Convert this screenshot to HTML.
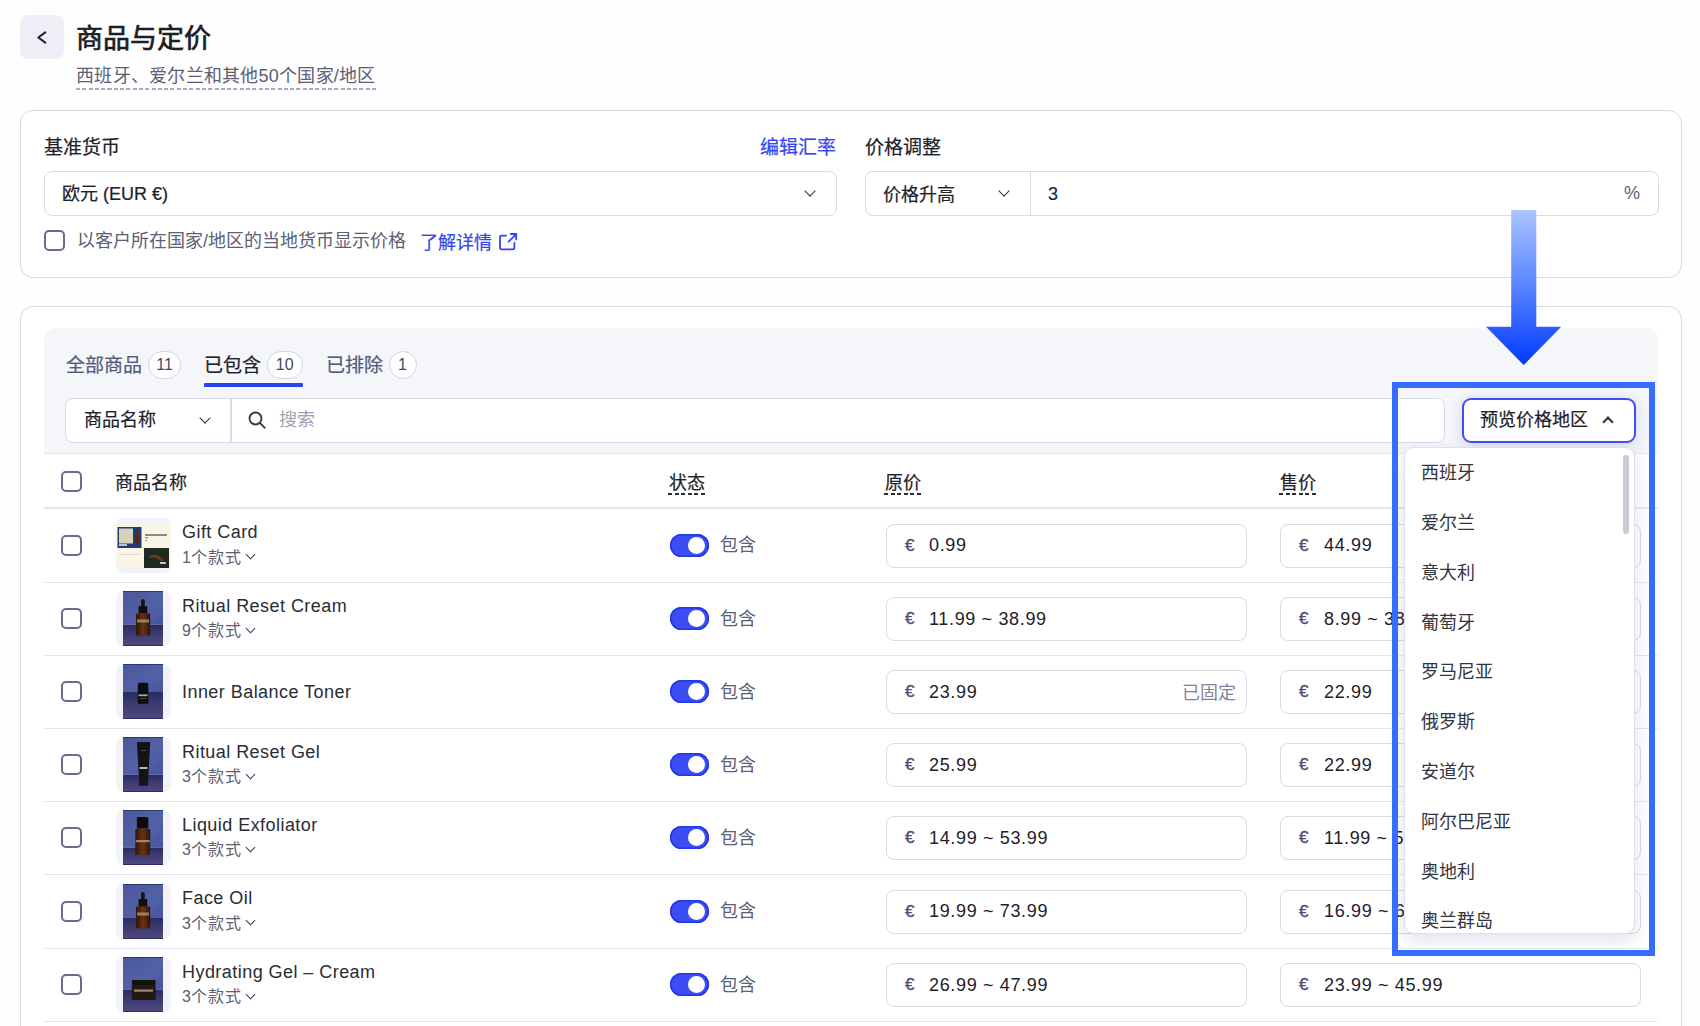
<!DOCTYPE html>
<html lang="zh-CN">
<head>
<meta charset="utf-8">
<style>
*{box-sizing:border-box;margin:0;padding:0}
html,body{width:1700px;height:1026px;overflow:hidden;background:#fefeff}
body{position:relative;font-family:"Liberation Sans",sans-serif;color:#1f2129}
.a{position:absolute;white-space:nowrap}
.t18{font-size:18px;line-height:24px}
.gray{color:#5b6073}
.med{font-weight:400;-webkit-text-stroke:0.22px currentColor}
.card{position:absolute;border:1.5px solid #d7dae7;border-radius:13px;background:#fff}
.box{position:absolute;border:1.5px solid #d7dae7;border-radius:8px;background:#fff}
.chev{position:absolute;width:8px;height:8px;border-right:1.7px solid #2e3140;border-bottom:1.7px solid #2e3140;transform:rotate(45deg)}
.cb{position:absolute;width:21px;height:21px;border:2.2px solid #676d92;border-radius:5px;background:#fff}
.sep{position:absolute;left:44px;width:1614px;height:1.5px;background:#e6e8ef}
.thumb{position:absolute;left:116px;width:55px;height:55px;border-radius:7px;background:#f2f3f8;overflow:hidden}
.pname{position:absolute;left:182px;font-size:18px;line-height:22px;color:#2a2c35;letter-spacing:0.45px}
.var{position:absolute;left:182px;font-size:16px;line-height:20px;color:#5b6073;letter-spacing:0.6px}
.tog{position:absolute;left:669.5px;width:39px;height:23px;border-radius:12px;background:#3d4df4;box-shadow:inset 0 0 0 1.5px #2236ea}
.tog:after{content:"";position:absolute;right:3.5px;top:3px;width:17px;height:17px;border-radius:50%;background:#fff}
.inc{position:absolute;left:720px;font-size:18px;line-height:24px;color:#5b6073}
.inp{position:absolute;height:44px;border:1.5px solid #d7dae7;border-radius:8px;background:#fff}
.eur{position:absolute;left:18px;top:10px;font-size:17px;line-height:22px;color:#4a5078;-webkit-text-stroke:0.4px #4a5078}
.val{position:absolute;left:42px;top:9.8px;font-size:18px;line-height:22px;color:#1f2129;letter-spacing:0.65px}
.badge{position:absolute;height:28px;border:1.5px solid #d2d5e3;border-radius:14px;background:#fff;font-size:16px;line-height:25px;text-align:center;color:#464a5c}
.vchev{display:inline-block;width:7px;height:7px;border-right:1.6px solid #5b6073;border-bottom:1.6px solid #5b6073;transform:rotate(45deg);margin-left:6px;position:relative;top:-4.5px;border-color:#3a3e52;border-width:0 1.8px 1.8px 0}
</style>
</head>
<body>
<svg width="0" height="0" style="position:absolute"><defs>
<linearGradient id="gtop" x1="0" y1="0" x2="1" y2="1"><stop offset="0" stop-color="#4b5799"/><stop offset="0.6" stop-color="#5261a6"/><stop offset="1" stop-color="#4654a0"/></linearGradient>
<linearGradient id="gbot" x1="0" y1="0" x2="0" y2="1"><stop offset="0" stop-color="#2a2b62"/><stop offset="0.5" stop-color="#3f3c74"/><stop offset="1" stop-color="#4e4a7c"/></linearGradient>
<linearGradient id="gamber" x1="0" y1="0" x2="1" y2="0"><stop offset="0" stop-color="#2e1408"/><stop offset=".5" stop-color="#6a3414"/><stop offset="1" stop-color="#2e1408"/></linearGradient>
</defs></svg>
<!-- header -->
<div class="a" style="left:20px;top:15px;width:44px;height:44px;border-radius:8px;background:#efeef7"></div>
<svg class="a" style="left:20px;top:15px" width="44" height="44" viewBox="0 0 44 44"><polyline points="25.3,17.4 18.3,22.5 25.3,27.6" fill="none" stroke="#1f2129" stroke-width="2" stroke-linecap="round" stroke-linejoin="round"/></svg>
<div class="a" style="left:76px;top:21px;font-size:27px;line-height:36px;color:#1c1e26;-webkit-text-stroke:0.7px #1c1e26">商品与定价</div>
<div class="a gray" style="left:76px;top:63.8px;font-size:18px;line-height:24px;letter-spacing:0.25px">西班牙、爱尔兰和其他50个国家/地区</div>
<div class="a" style="left:75.5px;top:88px;width:300px;height:2px;background:repeating-linear-gradient(90deg,#a6abc0 0 4px,transparent 4px 6.3px)"></div>

<!-- card 1 -->
<div class="card" style="left:20px;top:110px;width:1662px;height:168px"></div>
<div class="a med" style="left:44px;top:135.5px;font-size:19px;line-height:24px">基准货币</div>
<div class="a med" style="left:759.5px;top:135.5px;font-size:19px;line-height:24px;color:#3146f2">编辑汇率</div>
<div class="box" style="left:44px;top:171px;width:793px;height:45px"></div>
<div class="a t18 med" style="left:62px;top:182px">欧元 (EUR €)</div>
<div class="chev" style="left:806px;top:187px"></div>
<div class="a med" style="left:865px;top:135.5px;font-size:19px;line-height:24px">价格调整</div>
<div class="box" style="left:865px;top:171px;width:794px;height:45px"></div>
<div class="a" style="left:1029.5px;top:171px;width:1.5px;height:45px;background:#d7dae7"></div>
<div class="a t18 med" style="left:883px;top:182.5px">价格升高</div>
<div class="chev" style="left:1000px;top:187px"></div>
<div class="a t18" style="left:1048px;top:182px;-webkit-text-stroke:0.15px #1f2129">3</div>
<div class="a t18 gray" style="left:1624px;top:181px">%</div>
<div class="cb" style="left:44px;top:230px"></div>
<div class="a t18 gray" style="left:77px;top:229px">以客户所在国家/地区的当地货币显示价格</div>
<div class="a t18 med" style="left:420px;top:230.5px;color:#3146f2">了解详情</div>

<!-- card 2 -->
<div class="card" style="left:20px;top:306px;width:1662px;height:760px"></div>
<div class="a" style="left:44px;top:328px;width:1614px;height:126px;background:#f5f6fa;border-radius:12px 12px 0 0;border-bottom:1.5px solid #e3e5ee"></div>


<!-- tabs -->
<div class="a med" style="left:66px;top:351.5px;font-size:19px;line-height:28px;color:#535a78">全部商品</div>
<div class="badge" style="left:148px;top:351px;width:33px">11</div>
<div class="a med" style="left:204px;top:351.5px;font-size:19px;line-height:28px;color:#1f2129">已包含</div>
<div class="badge" style="left:266.5px;top:351px;width:36.5px">10</div>
<div class="a" style="left:204px;top:383px;width:99px;height:4px;background:#2b41f2;border-radius:1px"></div>
<div class="a med" style="left:326px;top:351.5px;font-size:19px;line-height:28px;color:#535a78">已排除</div>
<div class="badge" style="left:388.5px;top:351px;width:28px">1</div>
<!-- search row -->
<div class="box" style="left:65px;top:398px;width:1380px;height:45px"></div>
<div class="a" style="left:230px;top:398px;width:1.5px;height:45px;background:#d7dae7"></div>
<div class="a t18 med" style="left:84px;top:408px">商品名称</div>
<div class="chev" style="left:200.5px;top:414px"></div>
<svg class="a" style="left:247px;top:410px" width="20" height="20" viewBox="0 0 20 20"><circle cx="8.5" cy="8.5" r="6" fill="none" stroke="#353846" stroke-width="1.8"/><line x1="13" y1="13" x2="17.8" y2="17.8" stroke="#353846" stroke-width="1.8" stroke-linecap="round"/></svg>
<div class="a t18" style="left:279px;top:408px;color:#9ea2b6">搜索</div>
<div class="sep" style="top:507px"></div>
<div class="cb" style="left:61px;top:471px"></div>
<div class="a t18 med" style="left:115px;top:471px">商品名称</div>
<div class="a t18 med" style="left:669px;top:471px">状态</div>
<div class="a" style="left:668px;top:493px;width:37px;height:2px;background:repeating-linear-gradient(90deg,#2a2c36 0 4px,transparent 4px 6.6px)"></div>
<div class="a t18 med" style="left:885px;top:471px">原价</div>
<div class="a" style="left:884px;top:493px;width:37px;height:2px;background:repeating-linear-gradient(90deg,#2a2c36 0 4px,transparent 4px 6.6px)"></div>
<div class="a t18 med" style="left:1280px;top:471px">售价</div>
<div class="a" style="left:1279px;top:493px;width:37px;height:2px;background:repeating-linear-gradient(90deg,#2a2c36 0 4px,transparent 4px 6.6px)"></div>
<div class="sep" style="top:581.5px"></div>
<div class="cb" style="left:61px;top:534.5px"></div>
<div class="thumb" style="top:517.5px"><svg style="position:absolute;left:0;top:6px" width="55" height="44" viewBox="0 0 55 44"><rect width="55" height="44" fill="#fbf5e6"/><rect x="1.5" y="3" width="24" height="21" fill="#213a78"/><rect x="3" y="4.5" width="14" height="15" fill="#d8d2bb"/><rect x="19" y="8" width="4" height="12" rx="1" fill="#5a2a12"/><rect x="3" y="20" width="8" height="2" fill="#fff" opacity=".7"/><rect x="29" y="10" width="22" height="2" fill="#5b5b5b" opacity=".7"/><rect x="29" y="13" width="3" height="1.5" fill="#555" opacity=".6"/><rect x="29" y="16" width="2" height="1" fill="#555" opacity=".6"/><rect x="28" y="24" width="25" height="20" fill="#1f2a20"/><path d="M33 32 Q40 28 48 36 L46 38 Q40 32 34 34Z" fill="#6b3a22"/><rect x="44" y="38" width="6" height="2" fill="#eee" opacity=".8"/><rect x="3" y="30" width="21" height="1" fill="#bbb" opacity=".5"/></svg></div>
<div class="pname" style="top:521.0px">Gift Card</div>
<div class="var" style="top:547.5px">1个款式<span class="vchev"></span></div>
<div class="tog" style="top:533.5px"></div>
<div class="inc" style="top:533.0px">包含</div>
<div class="inp" style="left:886px;width:361px;top:523.5px"><span class="eur">€</span><span class="val">0.99</span></div>
<div class="inp" style="left:1280px;width:361px;top:523.5px"><span class="eur">€</span><span class="val" style="left:43px">44.99</span></div>
<div class="sep" style="top:654.5px"></div>
<div class="cb" style="left:61px;top:608.0px"></div>
<div class="thumb" style="top:591.0px"><svg style="position:absolute;left:7px;top:0px" width="40" height="55" viewBox="0 0 40 55"><rect x="0" y="0" width="40" height="33.5" fill="url(#gtop)"/><rect x="0" y="33.5" width="40" height="21.5" fill="url(#gbot)"/><rect x="0" y="0" width="40" height="0.8" fill="#24306e"/><rect x="0" y="54.2" width="40" height="0.8" fill="#2a2560"/><rect x="18" y="8" width="3.8" height="8" rx="1.9" fill="#1b1510"/><rect x="15.5" y="15" width="8.8" height="7.8" rx="1" fill="#120e0a"/><rect x="13" y="22.5" width="14.2" height="22" rx="1" fill="url(#gamber)"/><rect x="14" y="28.5" width="12" height="3" fill="#d9b894" opacity=".6"/></svg></div>
<div class="pname" style="top:594.5px">Ritual Reset Cream</div>
<div class="var" style="top:621.0px">9个款式<span class="vchev"></span></div>
<div class="tog" style="top:607.0px"></div>
<div class="inc" style="top:606.5px">包含</div>
<div class="inp" style="left:886px;width:361px;top:597.0px"><span class="eur">€</span><span class="val">11.99 ~ 38.99</span></div>
<div class="inp" style="left:1280px;width:361px;top:597.0px"><span class="eur">€</span><span class="val" style="left:43px">8.99 ~ 38.99</span></div>
<div class="sep" style="top:727.5px"></div>
<div class="cb" style="left:61px;top:681.0px"></div>
<div class="thumb" style="top:664.0px"><svg style="position:absolute;left:7px;top:0px" width="40" height="55" viewBox="0 0 40 55"><rect x="0" y="0" width="40" height="28" fill="url(#gtop)"/><rect x="0" y="28" width="40" height="27" fill="url(#gbot)"/><rect x="0" y="0" width="40" height="0.8" fill="#24306e"/><rect x="0" y="54.2" width="40" height="0.8" fill="#2a2560"/><rect x="14.8" y="18.7" width="10.5" height="21" rx="1.5" fill="#0c0c10"/><rect x="15.5" y="30.4" width="9" height="1.8" fill="#d9d9e0" opacity=".75"/><rect x="16.5" y="34" width="7" height="1" fill="#888" opacity=".5"/></svg></div>
<div class="pname" style="top:680.5px">Inner Balance Toner</div>
<div class="tog" style="top:680.0px"></div>
<div class="inc" style="top:679.5px">包含</div>
<div class="inp" style="left:886px;width:361px;top:670.0px"><span class="eur">€</span><span class="val">23.99</span><span class="a" style="right:10.5px;top:10.5px;font-size:18px;line-height:22px;color:#7f849a">已固定</span></div>
<div class="inp" style="left:1280px;width:361px;top:670.0px"><span class="eur">€</span><span class="val" style="left:43px">22.99</span></div>
<div class="sep" style="top:800.5px"></div>
<div class="cb" style="left:61px;top:754.0px"></div>
<div class="thumb" style="top:737.0px"><svg style="position:absolute;left:7px;top:0px" width="40" height="55" viewBox="0 0 40 55"><rect x="0" y="0" width="40" height="37.5" fill="url(#gtop)"/><rect x="0" y="37.5" width="40" height="17.5" fill="url(#gbot)"/><rect x="0" y="0" width="40" height="0.8" fill="#24306e"/><rect x="0" y="54.2" width="40" height="0.8" fill="#2a2560"/><path d="M13.9 5 L27.2 5 L24.9 48.7 L16.4 48.7 Z" fill="#141315"/><rect x="16.5" y="30" width="8" height="2" fill="#e0e0e6" opacity=".8"/><rect x="18" y="13" width="5" height="1" fill="#777" opacity=".5"/></svg></div>
<div class="pname" style="top:740.5px">Ritual Reset Gel</div>
<div class="var" style="top:767.0px">3个款式<span class="vchev"></span></div>
<div class="tog" style="top:753.0px"></div>
<div class="inc" style="top:752.5px">包含</div>
<div class="inp" style="left:886px;width:361px;top:743.0px"><span class="eur">€</span><span class="val">25.99</span></div>
<div class="inp" style="left:1280px;width:361px;top:743.0px"><span class="eur">€</span><span class="val" style="left:43px">22.99</span></div>
<div class="sep" style="top:873.5px"></div>
<div class="cb" style="left:61px;top:827.0px"></div>
<div class="thumb" style="top:810.0px"><svg style="position:absolute;left:7px;top:0px" width="40" height="55" viewBox="0 0 40 55"><rect x="0" y="0" width="40" height="37.5" fill="url(#gtop)"/><rect x="0" y="37.5" width="40" height="17.5" fill="url(#gbot)"/><rect x="0" y="0" width="40" height="0.8" fill="#24306e"/><rect x="0" y="54.2" width="40" height="0.8" fill="#2a2560"/><rect x="13.9" y="7" width="11.4" height="11.6" rx="1.5" fill="#0e0b09"/><rect x="12.3" y="18.4" width="14.9" height="26.6" rx="2" fill="url(#gamber)"/><rect x="12.8" y="30" width="14" height="2.2" fill="#e0c4a0" opacity=".6"/></svg></div>
<div class="pname" style="top:813.5px">Liquid Exfoliator</div>
<div class="var" style="top:840.0px">3个款式<span class="vchev"></span></div>
<div class="tog" style="top:826.0px"></div>
<div class="inc" style="top:825.5px">包含</div>
<div class="inp" style="left:886px;width:361px;top:816.0px"><span class="eur">€</span><span class="val">14.99 ~ 53.99</span></div>
<div class="inp" style="left:1280px;width:361px;top:816.0px"><span class="eur">€</span><span class="val" style="left:43px">11.99 ~ 50.99</span></div>
<div class="sep" style="top:947.5px"></div>
<div class="cb" style="left:61px;top:900.5px"></div>
<div class="thumb" style="top:883.5px"><svg style="position:absolute;left:7px;top:0px" width="40" height="55" viewBox="0 0 40 55"><rect x="0" y="0" width="40" height="34" fill="url(#gtop)"/><rect x="0" y="34" width="40" height="21" fill="url(#gbot)"/><rect x="0" y="0" width="40" height="0.8" fill="#24306e"/><rect x="0" y="54.2" width="40" height="0.8" fill="#2a2560"/><rect x="18" y="8" width="3.8" height="8" rx="1.9" fill="#1b1510"/><rect x="15.5" y="15" width="8.8" height="7.8" rx="1" fill="#120e0a"/><rect x="13" y="22.5" width="14.2" height="22" rx="1" fill="url(#gamber)"/><rect x="14" y="28.5" width="12" height="3" fill="#d9b894" opacity=".6"/></svg></div>
<div class="pname" style="top:887.0px">Face Oil</div>
<div class="var" style="top:913.5px">3个款式<span class="vchev"></span></div>
<div class="tog" style="top:899.5px"></div>
<div class="inc" style="top:899.0px">包含</div>
<div class="inp" style="left:886px;width:361px;top:889.5px"><span class="eur">€</span><span class="val">19.99 ~ 73.99</span></div>
<div class="inp" style="left:1280px;width:361px;top:889.5px"><span class="eur">€</span><span class="val" style="left:43px">16.99 ~ 69.99</span></div>
<div class="sep" style="top:1020.5px"></div>
<div class="cb" style="left:61px;top:974.0px"></div>
<div class="thumb" style="top:957.0px"><svg style="position:absolute;left:7px;top:0px" width="40" height="55" viewBox="0 0 40 55"><rect x="0" y="0" width="40" height="32.5" fill="url(#gtop)"/><rect x="0" y="32.5" width="40" height="22.5" fill="url(#gbot)"/><rect x="0" y="0" width="40" height="0.8" fill="#24306e"/><rect x="0" y="54.2" width="40" height="0.8" fill="#2a2560"/><rect x="9" y="23" width="23.5" height="5.5" rx="1" fill="#16110d"/><rect x="8.7" y="28" width="24" height="15" rx="1.5" fill="#221912"/><rect x="11" y="32.5" width="19" height="2.2" fill="#dcc6ae" opacity=".65"/></svg></div>
<div class="pname" style="top:960.5px">Hydrating Gel – Cream</div>
<div class="var" style="top:987.0px">3个款式<span class="vchev"></span></div>
<div class="tog" style="top:973.0px"></div>
<div class="inc" style="top:972.5px">包含</div>
<div class="inp" style="left:886px;width:361px;top:963.0px"><span class="eur">€</span><span class="val">26.99 ~ 47.99</span></div>
<div class="inp" style="left:1280px;width:361px;top:963.0px"><span class="eur">€</span><span class="val" style="left:43px">23.99 ~ 45.99</span></div>
<div class="a" style="left:1462px;top:398px;width:174px;height:45px;border:2px solid #3d50f6;border-radius:9px;background:#fff;box-shadow:0 2px 14px rgba(60,70,140,.18)"></div>
<div class="a t18 med" style="left:1480px;top:408px">预览价格地区</div>
<div class="chev" style="left:1604px;top:418px;transform:rotate(-135deg);border-width:0 2px 2px 0"></div>
<div class="a" style="left:1404px;top:447px;width:231px;height:487px;border:1px solid #dfe1ea;border-radius:10px;background:#fff;box-shadow:0 6px 18px rgba(60,70,140,.16);overflow:hidden">
<div class="a" style="left:16px;top:13.2px;font-size:18px;line-height:24px;color:#32353f">西班牙</div>
<div class="a" style="left:16px;top:63.0px;font-size:18px;line-height:24px;color:#32353f">爱尔兰</div>
<div class="a" style="left:16px;top:112.8px;font-size:18px;line-height:24px;color:#32353f">意大利</div>
<div class="a" style="left:16px;top:162.6px;font-size:18px;line-height:24px;color:#32353f">葡萄牙</div>
<div class="a" style="left:16px;top:212.4px;font-size:18px;line-height:24px;color:#32353f">罗马尼亚</div>
<div class="a" style="left:16px;top:262.2px;font-size:18px;line-height:24px;color:#32353f">俄罗斯</div>
<div class="a" style="left:16px;top:312.0px;font-size:18px;line-height:24px;color:#32353f">安道尔</div>
<div class="a" style="left:16px;top:361.8px;font-size:18px;line-height:24px;color:#32353f">阿尔巴尼亚</div>
<div class="a" style="left:16px;top:411.6px;font-size:18px;line-height:24px;color:#32353f">奥地利</div>
<div class="a" style="left:16px;top:461.4px;font-size:18px;line-height:24px;color:#32353f">奥兰群岛</div>
<div class="a" style="left:218px;top:7px;width:5.5px;height:79px;border-radius:3px;background:#c9cbd8"></div>
</div>
<div class="a" style="left:1392px;top:382px;width:262.5px;height:574px;border:6px solid #376dff"></div>
<svg class="a" style="left:1480px;top:205px" width="90" height="165" viewBox="1480 205 90 165"><defs><linearGradient id="garr" x1="0" y1="210" x2="0" y2="365" gradientUnits="userSpaceOnUse"><stop offset="0" stop-color="#aac5ff"/><stop offset="0.55" stop-color="#4f7cff"/><stop offset="1" stop-color="#0038ff"/></linearGradient></defs><path d="M1511.2 210 H1536.3 V326.8 H1561.2 L1523.7 365 L1486 326.8 H1511.2 Z" fill="url(#garr)"/></svg>
<svg class="a" style="left:498px;top:232px" width="20" height="20" viewBox="0 0 20 20"><path d="M8.2 3.6 H3.6 Q2 3.6 2 5.2 V15.8 Q2 17.4 3.6 17.4 H14.8 Q16.4 17.4 16.4 15.8 V10.8" fill="none" stroke="#3146f2" stroke-width="1.8" stroke-linecap="round"/><path d="M12.8 2 H18.2 V7.4 M17.9 2.3 L10.6 9.6" fill="none" stroke="#3146f2" stroke-width="1.8" stroke-linecap="round" stroke-linejoin="round"/></svg>
</body>
</html>
